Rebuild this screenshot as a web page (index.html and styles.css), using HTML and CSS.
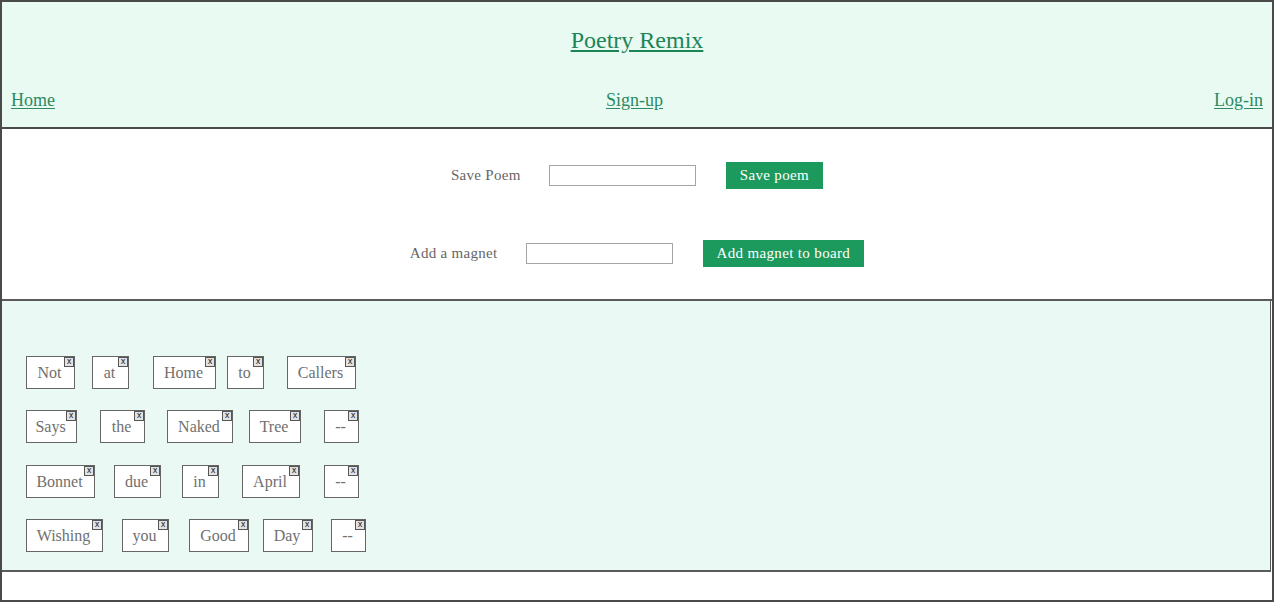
FILE: index.html
```html
<!DOCTYPE html>
<html lang="en">
<head>
<meta charset="utf-8">
<title>Poetry Remix</title>
<link rel="stylesheet" href="styles.css">
</head>
<body>
<div class="page">
  <header class="header">
    <h1 class="title"><a href="#">Poetry Remix</a></h1>
    <nav class="nav">
      <a href="#">Home</a>
      <a href="#">Sign-up</a>
      <a href="#">Log-in</a>
    </nav>
  </header>
  <section class="forms">
    <div class="form-row">
      <label class="form-label">Save Poem</label>
      <input class="form-input" type="text">
      <button class="form-btn">Save poem</button>
    </div>
    <div class="form-row">
      <label class="form-label">Add a magnet</label>
      <input class="form-input" type="text">
      <button class="form-btn">Add magnet to board</button>
    </div>
  </section>
  <section class="board">
    <div class="magnet" style="left:24px;top:55px;width:49px">Not<span class="close">x</span></div>
    <div class="magnet" style="left:90px;top:55px;width:37px">at<span class="close">x</span></div>
    <div class="magnet" style="left:151px;top:55px;width:63px">Home<span class="close">x</span></div>
    <div class="magnet" style="left:225px;top:55px;width:37px">to<span class="close">x</span></div>
    <div class="magnet" style="left:285px;top:55px;width:69px">Callers<span class="close">x</span></div>

    <div class="magnet" style="left:24px;top:109px;width:51px">Says<span class="close">x</span></div>
    <div class="magnet" style="left:98px;top:109px;width:45px">the<span class="close">x</span></div>
    <div class="magnet" style="left:165px;top:109px;width:66px">Naked<span class="close">x</span></div>
    <div class="magnet" style="left:247px;top:109px;width:52px">Tree<span class="close">x</span></div>
    <div class="magnet" style="left:322px;top:109px;width:35px">--<span class="close">x</span></div>

    <div class="magnet" style="left:24px;top:164px;width:69px">Bonnet<span class="close">x</span></div>
    <div class="magnet" style="left:112px;top:164px;width:47px">due<span class="close">x</span></div>
    <div class="magnet" style="left:180px;top:164px;width:37px">in<span class="close">x</span></div>
    <div class="magnet" style="left:240px;top:164px;width:58px">April<span class="close">x</span></div>
    <div class="magnet" style="left:322px;top:164px;width:35px">--<span class="close">x</span></div>

    <div class="magnet" style="left:24px;top:218px;width:77px">Wishing<span class="close">x</span></div>
    <div class="magnet" style="left:120px;top:218px;width:47px">you<span class="close">x</span></div>
    <div class="magnet" style="left:187px;top:218px;width:60px">Good<span class="close">x</span></div>
    <div class="magnet" style="left:261px;top:218px;width:50px">Day<span class="close">x</span></div>
    <div class="magnet" style="left:329px;top:218px;width:35px">--<span class="close">x</span></div>
  </section>
  <div class="footer-space"></div>
</div>
</body>
</html>
```

FILE: styles.css
```css
* { box-sizing: border-box; }
html, body { margin: 0; padding: 0; background: #fff; }
body { font-family: "Liberation Serif", "Times New Roman", serif; }

.page {
  width: 1274px;
  height: 602px;
  border: 2px solid #4a4a4a;
  display: flex;
  flex-direction: column;
  overflow: hidden;
}

.header {
  background: #e9faf3;
  border-bottom: 2px solid #4a4a4a;
  height: 127px;
  display: flex;
  flex-direction: column;
  padding-top: 24px;
}

.title {
  margin: 0;
  text-align: center;
  font-size: 24px;
  font-weight: normal;
  line-height: 28px;
}
.title a { color: #1d8456; text-decoration: underline; text-underline-offset: 2px; }

.nav {
  margin-top: 34px;
  display: flex;
  justify-content: space-between;
  padding: 0 9px;
  font-size: 18px;
  line-height: 24px;
}
.nav a { color: #2b8a61; text-decoration: underline; text-underline-offset: 2px; }

.forms {
  height: 172px;
  border-bottom: 2px solid #5a5a5a;
  padding-top: 33px;
  display: flex;
  flex-direction: column;
  align-items: center;
  gap: 51px;
}

.form-row {
  display: flex;
  align-items: center;
  height: 27px;
}

.form-label {
  font-size: 15px;
  letter-spacing: 0.3px;
  color: #666;
  margin-right: 28px;
}

.form-input {
  width: 147px;
  height: 21px;
  border: 1px solid #a5a5a5;
  background: #fff;
  margin: 0 30px 0 0;
  padding: 0;
}

.form-btn {
  height: 27px;
  border: none;
  background: #1c9a5d;
  color: #fff;
  font-family: "Liberation Serif", "Times New Roman", serif;
  font-size: 15px;
  letter-spacing: 0.35px;
  padding: 0 14px;
  cursor: pointer;
}

.board {
  position: relative;
  height: 271px;
  background: #eaf9f3;
  border-bottom: 2px solid #5a5a5a;
  border-right: 1px solid #5a5a5a;
  margin-right: 1px;
}

.magnet {
  position: absolute;
  height: 33px;
  border: 1px solid #666;
  background: #fff;
  color: #707070;
  font-size: 16px;
  line-height: 31px;
  text-align: center;
  padding-right: 2px;
}

.close {
  position: absolute;
  top: 0;
  right: 0;
  width: 10px;
  height: 10px;
  border: 1px solid #555;
  background: #e2e2e2;
  color: #222;
  font-family: "DejaVu Sans", sans-serif;
  font-size: 8px;
  line-height: 7px;
  text-align: center;
}

.footer-space { flex: 1; background: #fff; }
```
